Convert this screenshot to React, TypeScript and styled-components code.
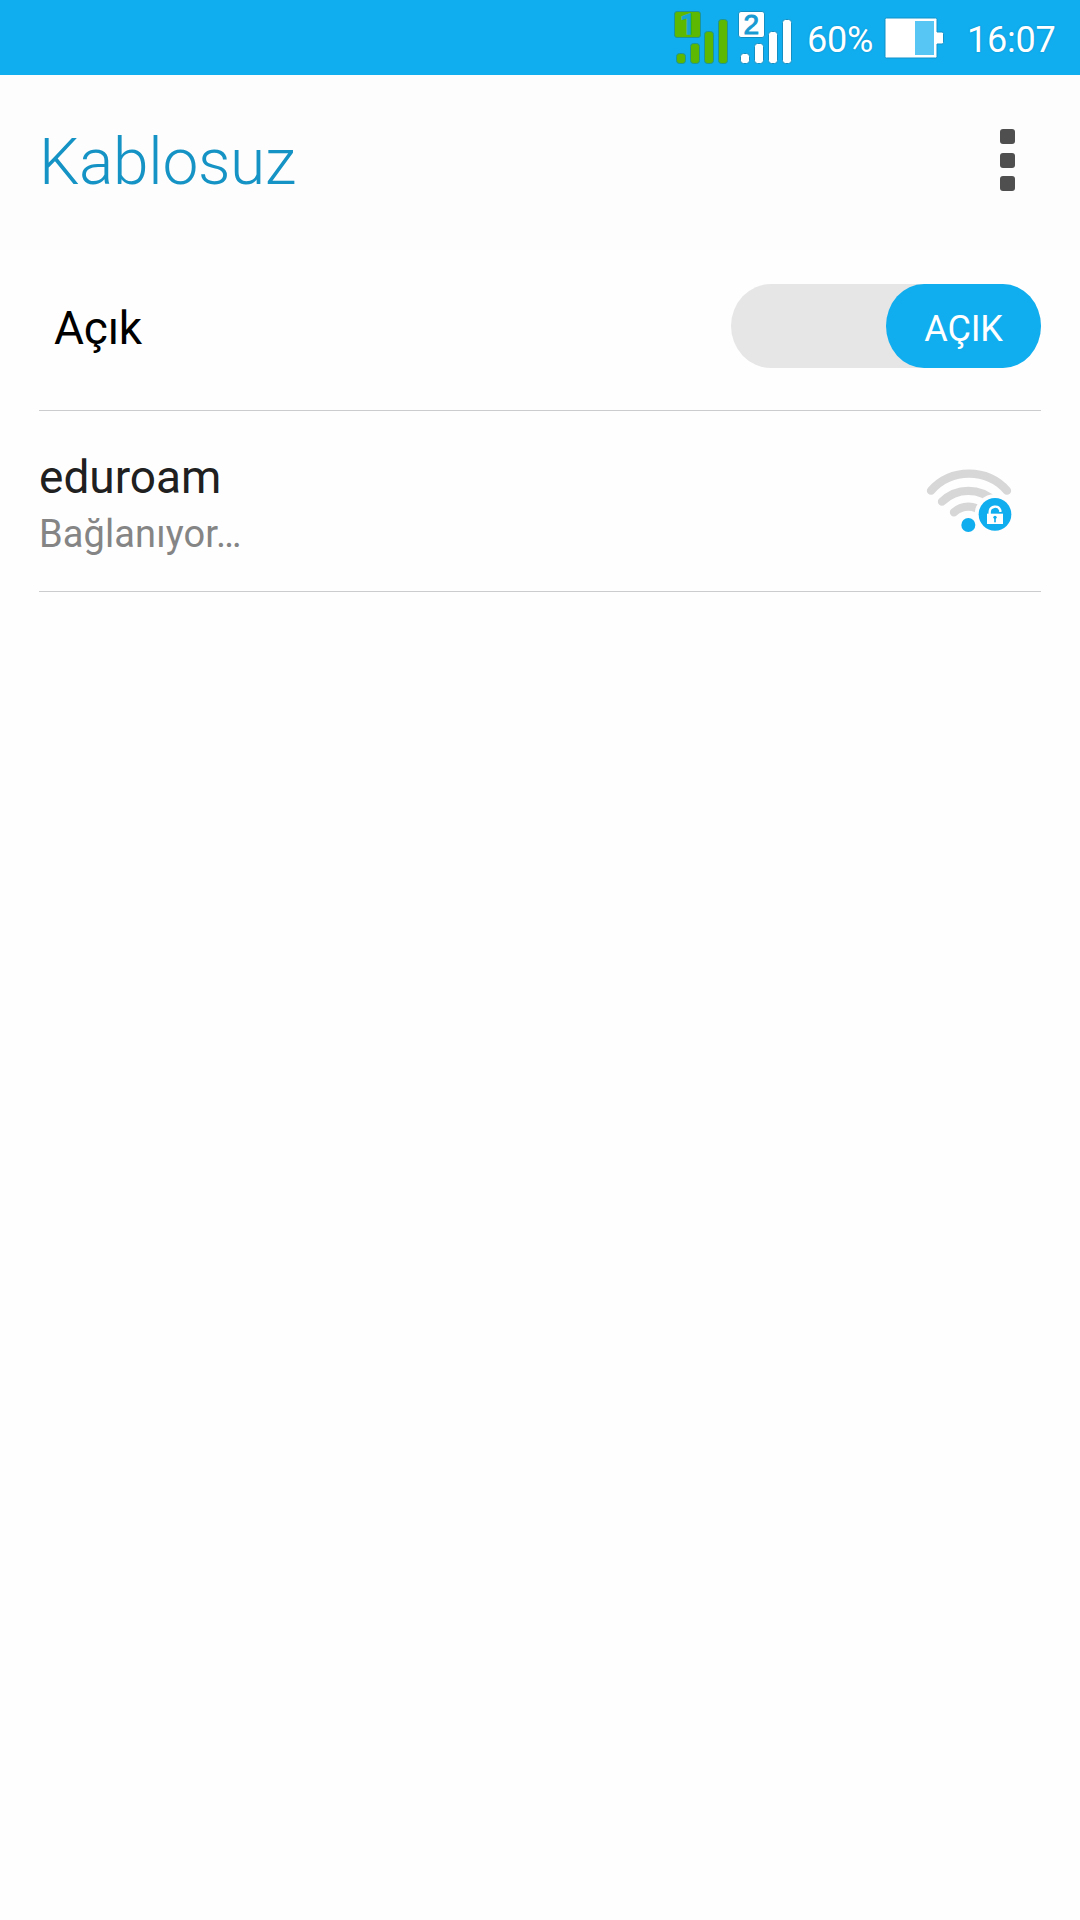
import React from "react";
import styled, { createGlobalStyle } from "styled-components";

const GlobalStyle = createGlobalStyle`
  * { box-sizing: border-box; }
  body {
    margin: 0;
    background: #fefefe;
    font-family: Roboto, "Noto Sans", sans-serif;
  }
`;

const Screen = styled.div`
  display: flex;
  flex-direction: column;
  width: 1080px;
  height: 1920px;
  background: #fefefe;
`;

const StatusBar = styled.header`
  display: flex;
  justify-content: flex-end;
  height: 75px;
  padding-right: 23px;
  background: #10aeef;
  color: #fff;
`;

const SignalIcon = styled.svg`
  flex: none;
  width: 64px;
  height: 75px;
`;

const StatusText = styled.span<{ $width: number; $gap: number }>`
  flex: none;
  width: ${(p) => p.$width}px;
  margin-left: ${(p) => p.$gap}px;
  padding-top: 19px;
  font-size: 36px;
  line-height: 42px;
  letter-spacing: -0.2px;
  white-space: nowrap;
  text-shadow: 0 0 2px rgba(0, 70, 120, 0.35);
`;

const BatteryIcon = styled.svg`
  flex: none;
  width: 62px;
  height: 75px;
  margin-left: 9px;
`;

const TitleBar = styled.div`
  display: flex;
  align-items: flex-start;
  justify-content: space-between;
  height: 175px;
  padding: 50px 65px 0 39px;
  background: #fdfdfd;
`;

const Title = styled.h1`
  margin: 0;
  color: #1593c4;
  font-size: 64px;
  font-weight: 300;
  line-height: 76px;
  letter-spacing: -0.3px;
`;

const MenuButton = styled.button`
  display: flex;
  flex-direction: column;
  gap: 8.5px;
  margin: 4px 0 0;
  padding: 0;
  border: 0;
  background: none;
`;

const MenuDot = styled.span`
  width: 15px;
  height: 15px;
  border-radius: 3px;
  background: #4f4f4f;
`;

const List = styled.main`
  display: flex;
  flex-direction: column;
  margin: 0 39px;
`;

const Row = styled.section<{ $height: number }>`
  display: flex;
  justify-content: space-between;
  height: ${(p) => p.$height}px;
  border-bottom: 1px solid #cbcccd;
`;

const SwitchLabel = styled.span`
  padding: 51px 0 0 15px;
  color: #000;
  font-size: 46px;
  line-height: 54px;
  letter-spacing: -0.2px;
`;

const Switch = styled.button`
  display: flex;
  justify-content: flex-end;
  width: 310px;
  height: 84px;
  margin: 34px 0 0;
  padding: 0;
  border: 0;
  border-radius: 40px / 42px;
  background: #e6e6e6;
  font-family: inherit;
`;

const SwitchThumb = styled.span`
  display: flex;
  justify-content: center;
  width: 155px;
  height: 84px;
  padding-top: 24px;
  border-radius: 38px / 42px;
  background: #10aeef;
  color: #fff;
  font-size: 36px;
  line-height: 42px;
  letter-spacing: -0.2px;
`;

const Network = styled.div`
  display: flex;
  flex-direction: column;
  padding-top: 39px;
`;

const NetworkName = styled.span`
  color: #202020;
  font-size: 46px;
  line-height: 54px;
`;

const NetworkState = styled.span`
  margin-top: 7px;
  color: #858585;
  font-size: 38px;
  line-height: 46px;
  letter-spacing: 0.1px;
`;

const WifiIcon = styled.svg`
  width: 120px;
  height: 100px;
  margin: 39px 11px 0 0;
`;

interface SignalProps {
  fill: string;
  edge: string;
  digitColor: string;
  digit: string;
  digitX: number;
  digitStroke: number;
  font: string;
}

function Signal({ fill, edge, digitColor, digit, digitX, digitStroke, font }: SignalProps) {
  return (
    <SignalIcon viewBox="0 0 64 75">
      <g fill={fill} stroke={edge} strokeWidth="1">
        <rect x="0.5" y="11.5" width="26" height="26" rx="2.5" />
        <rect x="2.5" y="53.5" width="9" height="10" rx="3" />
        <rect x="16.5" y="43.5" width="9" height="20" rx="3" />
        <rect x="30.5" y="31.5" width="9" height="32" rx="3" />
        <rect x="44.5" y="19.5" width="9" height="44" rx="3" />
      </g>
      <text
        x={digitX}
        y="34.4"
        textAnchor="middle"
        fontFamily={font}
        fontSize="28"
        fill={digitColor}
        stroke={digitColor}
        strokeWidth={digitStroke}
      >
        {digit}
      </text>
    </SignalIcon>
  );
}

export default function App() {
  return (
    <Screen>
      <GlobalStyle />
      <StatusBar>
        <Signal
          fill="#5cb800"
          edge="#1f9494"
          digitColor="#16a4d4"
          digit="1"
          digitX={14}
          digitStroke={1.6}
          font="Roboto, sans-serif"
        />
        <Signal
          fill="#ffffff"
          edge="#148fc4"
          digitColor="#189bd2"
          digit="2"
          digitX={13.2}
          digitStroke={1}
          font="Liberation Sans, sans-serif"
        />
        <StatusText $width={68} $gap={5}>60%</StatusText>
        <BatteryIcon viewBox="0 0 62 75">
          <path
            d="M2.5 18H51.5Q53 18 53 19.5V32H58Q59.5 32 59.5 33.5V42.5Q59.5 44 58 44H53V56.5Q53 58 51.5 58H2.5Q1 58 1 56.5V19.5Q1 18 2.5 18Z"
            fill="#fff"
            stroke="#1291c8"
          />
          <rect x="31" y="21" width="19" height="34" fill="#58c6f4" />
        </BatteryIcon>
        <StatusText $width={90} $gap={21}>16:07</StatusText>
      </StatusBar>
      <TitleBar>
        <Title>Kablosuz</Title>
        <MenuButton aria-label="Menü">
          <MenuDot />
          <MenuDot />
          <MenuDot />
        </MenuButton>
      </TitleBar>
      <List>
        <Row $height={161}>
          <SwitchLabel>Açık</SwitchLabel>
          <Switch>
            <SwitchThumb>AÇIK</SwitchThumb>
          </Switch>
        </Row>
        <Row $height={181}>
          <Network>
            <NetworkName>eduroam</NetworkName>
            <NetworkState>Bağlanıyor…</NetworkState>
          </Network>
          <WifiIcon viewBox="0 0 360 300">
            <g fill="none" stroke="#d7d7d7" strokeWidth="25" strokeLinecap="round">
              <path d="M63 122A153 153 0 0 1 291 122" />
              <path d="M96 155A112 112 0 0 1 254 155" />
              <path d="M132 187A62 62 0 0 1 218 187" />
            </g>
            <circle cx="255" cy="193" r="61" fill="#fefefe" />
            <circle cx="175" cy="225" r="21" fill="#10aeef" />
            <circle cx="255" cy="193" r="49" fill="#10aeef" />
            <path
              d="M239 193V186A16.5 16.5 0 0 1 271 181V186"
              fill="none"
              stroke="#fff"
              strokeWidth="7"
            />
            <rect x="231" y="191" width="48" height="31" fill="#fff" />
            <circle cx="255" cy="202" r="5" fill="#10aeef" />
            <rect x="252.5" y="203" width="5" height="14" fill="#10aeef" />
          </WifiIcon>
        </Row>
      </List>
    </Screen>
  );
}
